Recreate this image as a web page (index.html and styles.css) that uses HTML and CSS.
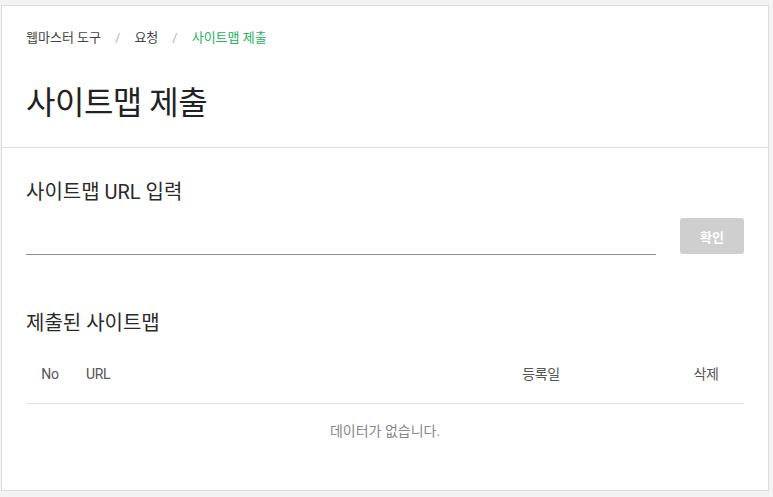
FILE: index.html
```html
<!DOCTYPE html>
<html lang="ko">
<head>
<meta charset="utf-8">
<title>사이트맵 제출</title>
<link rel="stylesheet" href="styles.css">
</head>
<body>
<div class="card">
  <header class="head">
    <nav class="crumbs">
      <span class="crumb">웹마스터 도구</span>
      <span class="sep">/</span>
      <span class="crumb">요청</span>
      <span class="sep">/</span>
      <span class="crumb current">사이트맵 제출</span>
    </nav>
    <h1 class="title">사이트맵 제출</h1>
  </header>
  <section class="body">
    <h2 class="sub">사이트맵 URL 입력</h2>
    <div class="form-row">
      <input class="url-input" type="text" aria-label="사이트맵 URL">
      <button class="btn" type="button">확인</button>
    </div>
    <h2 class="sub sub-list">제출된 사이트맵</h2>
    <div class="table">
      <div class="thead">
        <div class="c-no">No</div>
        <div class="c-url">URL</div>
        <div class="c-date">등록일</div>
        <div class="c-del">삭제</div>
      </div>
      <div class="empty">데이터가 없습니다.</div>
    </div>
  </section>
</div>
</body>
</html>
```

FILE: styles.css
```css
* { box-sizing: border-box; }
html, body { margin: 0; padding: 0; }
body {
  background: #f4f4f4;
  font-family: "Roboto", "Noto Sans CJK KR", sans-serif;
  color: #222;
  padding: 5px 5px 6px 1px;
}
.card {
  width: 768px;
  height: 486px;
  background: #fff;
  border: 1px solid #dcdcdc;
}
.head {
  padding: 22px 24px 24px;
  border-bottom: 1px solid #dedede;
}
.crumbs {
  display: flex;
  align-items: center;
  height: 20px;
  font-size: 13px;
  line-height: 20px;
  color: #444;
}
.sep {
  color: #b5b5b5;
  margin: 0 14px;
}
.current { color: #27b25a; }
.title {
  margin: 35px 0 0;
  font-size: 32px;
  line-height: 40px;
  font-weight: 400;
  letter-spacing: -0.5px;
  color: #222;
}
.body {
  padding: 30px 24px 0 24px;
}
.sub {
  margin: 0;
  font-size: 20px;
  line-height: 28px;
  font-weight: 400;
  color: #2a2a2a;
}
.form-row {
  display: flex;
  align-items: flex-start;
  gap: 24px;
  margin-top: 12px;
}
.url-input {
  flex: 1;
  height: 37px;
  border: 0;
  border-bottom: 1px solid #8e8e8e;
  outline: none;
  background: transparent;
  font: inherit;
}
.btn {
  width: 64px;
  height: 36px;
  border: 0;
  border-radius: 3px;
  background: #cfcfcf;
  color: #fff;
  font-family: "Noto Sans CJK KR", sans-serif;
  font-weight: 700;
  font-size: 13px;
  padding: 0;
}
.sub-list { margin-top: 54px; }
.table { margin-top: 13px; }
.thead {
  display: grid;
  grid-template-columns: 48px 1fr 254px 76px;
  padding: 14px 0 19px;
  line-height: 20px;
  font-size: 14px;
  color: #555;
  border-bottom: 1px solid #e2e2e2;
  letter-spacing: -0.3px;
}
.c-no, .c-date, .c-del { text-align: center; }
.c-url { padding-left: 12px; }
.empty {
  padding-top: 17px;
  text-align: center;
  font-size: 14px;
  line-height: 20px;
  color: #888;
}
```
